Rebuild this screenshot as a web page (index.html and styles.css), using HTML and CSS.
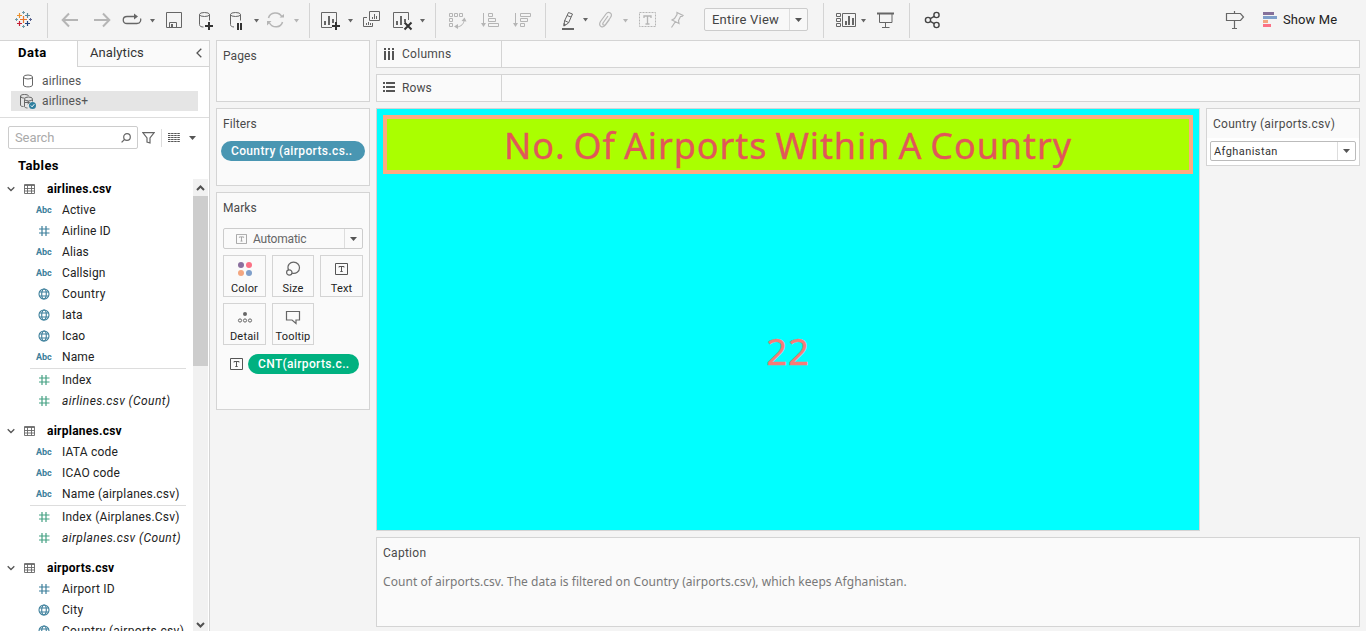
FILE: index.html
```html
<!DOCTYPE html>
<html lang="en">
<head>
<meta charset="utf-8">
<title>Airports worksheet</title>
<link rel="stylesheet" href="styles.css">
</head>
<body>
<svg width="0" height="0" class="defs">
  <symbol id="hash" viewBox="0 0 12 12"><path d="M4 1v10M8 1v10M1 4h10.500M1 8h10.500" fill="none" stroke="currentColor" stroke-width="1.200"/></symbol>
  <symbol id="globe" viewBox="0 0 12 12"><g fill="none" stroke="currentColor" stroke-width="1.100"><circle cx="6" cy="6" r="5"/><ellipse cx="6" cy="6" rx="2.300" ry="5"/><path d="M1.500 4h9M1.500 8h9"/></g></symbol>
  <symbol id="table" viewBox="0 0 11 10"><path d="M.5.5h10v9H.5zM.5 1.500h10M.5 4.500h10M.5 7h10M3.500 1v8.500M7.500 1v8.500" fill="none" stroke="#666" stroke-width=".9"/></symbol>
  <symbol id="open" viewBox="0 0 8 6"><path d="M.7 1.200L4 4.500 7.300 1.200" fill="none" stroke="#555" stroke-width="1.300"/></symbol>
  <symbol id="caret" viewBox="0 0 7 4"><path d="M0 0h7L3.500 4z" fill="currentColor"/></symbol>
  <symbol id="tmark" viewBox="0 0 13 12"><path d="M.5.5h12v11H.5z" fill="none" stroke="currentColor"/><path d="M4 4.500V3.500h5v1M6.500 3.500v5M5.300 8.500h2.400" fill="none" stroke="currentColor"/></symbol>
</svg>

<header class="toolbar">
  <svg width="47" height="40" viewBox="0 0 47 40"><g stroke-width="1.200"><path stroke="#e8762d" d="M23.500 16v7M20 19.500h7"/><path stroke="#eb912c" d="M19.500 13v5M17 15.500h5"/><path stroke="#59879b" d="M27.500 13v5M25 15.500h5"/><path stroke="#c72035" d="M19.500 21v5M17 23.500h5"/><path stroke="#1f447e" d="M27.500 21v5M25 23.500h5"/><path stroke="#7099a6" stroke-width="1" d="M23.500 11v3M22 12.500h3M23.500 25v3M22 26.500h3M16.500 18v3M15 19.500h3"/><path stroke="#5b6591" stroke-width="1" d="M30.500 18v3M29 19.500h3"/></g></svg>
  <i class="sep"></i>
  <svg width="36" height="40" viewBox="48 0 36 40"><path class="off s2" d="M63 20h15M69 13.500L62.700 20l6.300 6.500"/></svg>
  <svg width="32" height="40" viewBox="84 0 32 40"><path class="off s2" d="M94 20h15M103 13.500l6.300 6.500-6.300 6.500"/></svg>
  <svg width="46" height="40" viewBox="116 0 46 40"><path class="on" stroke-width="1.300" d="M132 16.500h-5c-5 0-5 7 0 7h10c4 0 4-4 3.500-5M128 16.500h7"/><path class="fill" d="M134 13.500l4 3-4 3zM150 19h5l-2.500 3.500z"/></svg>
  <svg width="28" height="40" viewBox="162 0 28 40"><path class="on" d="M166.500 12.500h15v15h-15zM169.500 27v-4.500h7V27"/><path class="fill" d="M171 24h2v3h-2z"/></svg>
  <svg width="32" height="40" viewBox="190 0 32 40"><path class="on" d="M199.500 14.500v10c0 2 2 2.500 4 2.500M209.500 14.500v6"/><ellipse class="on" cx="204.500" cy="14.500" rx="5" ry="2"/><path class="dark" d="M209 22v8M205 26h8"/></svg>
  <svg width="40" height="40" viewBox="222 0 40 40"><path class="on" d="M230.500 14.500v10c0 1.500 1 2.200 3.500 2.500M240.500 14.500v6"/><ellipse class="on" cx="235.500" cy="14.500" rx="5" ry="2"/><path class="dark" d="M238 23v7M241 23v7"/><path class="fill" d="M254 19h5l-2.500 3.500z"/></svg>
  <svg width="47" height="40" viewBox="262 0 47 40"><path class="off" stroke-width="1.500" d="M268.500 18c1.500-6 10.500-7 13.500-1M282.500 22c-1.500 6-10 6.500-13 1"/><path class="offfill" d="M279.500 17.500h4.500V14zM267 25.500v-4.500h4.500zM294 19h5l-2.500 3.500z"/></svg>
  <i class="sep"></i>
  <svg width="48" height="40" viewBox="310 0 48 40"><path class="on" d="M332 27.500h-10.500v-15h15V22"/><path class="fill" d="M324 21h2v4h-2zM328 16h2v9h-2zM332 19h2v4h-2zM348 19h5l-2.500 3.500z"/><path class="dark" d="M336 22v8M332 26h8"/></svg>
  <svg width="30" height="40" viewBox="358 0 30 40"><path class="on" d="M369.500 11.500h10v9h-10zM367 17.500h-3.500v9h9V23M372.500 19v-2M374.500 19v-5M376.500 19v-3M366.500 25v-2M368.500 25v-3M370.500 25v-2"/></svg>
  <svg width="47" height="40" viewBox="388 0 47 40"><path class="on" d="M403 27.500h-9.500v-15h15V20"/><path class="fill" d="M396 21h2v4h-2zM400 16h2v9h-2zM404 19h2v3h-2zM420 19h5l-2.500 3.500z"/><path class="dark" d="M404.500 22.500l7 7M411.500 22.500l-7 7"/></svg>
  <i class="sep"></i>
  <svg width="38" height="40" viewBox="436 0 38 40"><path class="off" d="M449.500 13.500h3v3h-3zM454.500 13.500h3v3h-3zM459.500 13.500h3v3h-3zM449.500 18.500h3v3h-3zM449.500 23.500h3v3h-3zM464 20c0 4-3 6.500-7 7"/><path class="offfill" d="M461.500 21l3-3.500 2 4zM458 24v5l-4-2.500z"/></svg>
  <svg width="32" height="40" viewBox="474 0 32 40"><path class="off" d="M483.500 13v11M488.500 13.500h4v3h-4zM488.500 18.500h7v3h-7zM488.500 23.500h10v3h-10z"/><path class="offfill" d="M481 23h5l-2.500 4z"/></svg>
  <svg width="39" height="40" viewBox="506 0 39 40"><path class="off" d="M515.500 13v11M520.500 13.500h10v3h-10zM520.500 18.500h7v3h-7zM520.500 23.500h4v3h-4z"/><path class="offfill" d="M513 23h5l-2.500 4z"/></svg>
  <i class="sep"></i>
  <svg width="46" height="40" viewBox="546 0 46 40"><path class="on" d="M568.500 12.500l4 1.500-4 9-4.500 3 .5-5zM564.500 20.500l4 2M567 15.500l4 1.500"/><path class="fill" d="M562 28h12v2h-12zM583 18h5l-2.500 3.500zM563.500 23l2.500 1.500-2.500 2z"/></svg>
  <svg width="42" height="40" viewBox="592 0 42 40"><path class="off" stroke-width="1.200" d="M608 16l-5 7c-1 2 1.500 3 2.500 1.500l5-7c3-4-2-7-4.500-3.500l-5.500 7.500c-3 5 2.500 7 5 3.500l4-5.500"/><path class="offfill" d="M623 19h5l-2.500 3.500z"/></svg>
  <svg width="30" height="40" viewBox="634 0 30 40"><path class="off" stroke-dasharray="2 1" d="M639.500 12.500h16v14h-16z"/><path class="off" stroke-width="1.300" d="M644 18v-2h7v2M647.500 16v8M645.500 24h4"/></svg>
  <svg width="40" height="40" viewBox="664 0 40 40"><path class="off" stroke-width="1.200" d="M677 12.500l6 3-1 1-1.500 0-2 4 .5 3-7-3.500 2.500-1.500 2.500-4zM675.500 21.500l-4 6"/></svg>
  <div class="fit"><span>Entire View</span><b><svg width="7" height="4"><use href="#caret"/></svg></b></div>
  <i class="sep sep-fit"></i>
  <svg width="46" height="40" viewBox="824 0 46 40"><path class="on" d="M836.500 13.500h4v3h-4zM836.500 18.500h4v3h-4zM836.500 23.500h4v3h-4zM842.500 13.500h13v13h-13z"/><path class="fill" d="M845 21h2v4h-2zM848 16h2v9h-2zM852 18h2v7h-2zM861 19h5l-2.500 3.500z"/></svg>
  <svg width="39" height="40" viewBox="870 0 39 40"><path class="fill" d="M877 12.500h17v2h-17z"/><path class="on" d="M879.500 14v8.500h12.500V14M885.500 23v4.500M882 27.500h7.500"/></svg>
  <i class="sep"></i>
  <svg width="50" height="40" viewBox="910 0 50 40"><g fill="none" stroke="#444" stroke-width="1.400"><circle cx="928" cy="20" r="2.600"/><circle cx="936.500" cy="15" r="2.600"/><circle cx="936.500" cy="25" r="2.600"/><path d="M930.300 18.600l4-2.300M930.300 21.400l4 2.300"/></g></svg>
  <svg class="push" width="32" height="40" viewBox="1220 0 32 40"><path class="on" stroke-width="1.200" d="M1226.500 13.500h14l3 3.500-3 3.500h-14zM1234.500 11v2.500M1234.500 20.500v8M1232 28.500h5"/></svg>
  <svg width="31" height="40" viewBox="1252 0 31 40"><path fill="#85709a" d="M1263 12h11v3h-11z"/><path fill="#7f9fca" d="M1263 16h14v3h-14z"/><path fill="#f3a680" d="M1263 20h5v3h-5z"/><path fill="#fb7185" d="M1263 24h8v3h-8z"/></svg>
  <span class="showme">Show Me</span>
</header>

<div class="work">
<aside class="side">
  <div class="tabs"><span class="tab active">Data</span><span class="tab"><span>Analytics</span><svg width="6" height="10" viewBox="0 0 6 10"><path d="M5.300.7L1 5l4.300 4.300" fill="none" stroke="#555" stroke-width="1.300"/></svg></span></div>
  <div class="sources">
    <div class="src"><svg width="16" height="16" viewBox="0 0 16 16"><path class="on" d="M3.500 4v8c0 2.500 9 2.500 9 0V4"/><ellipse class="on" cx="8" cy="4" rx="4.500" ry="2"/></svg><span>airlines</span></div>
    <div class="src sel"><svg width="16" height="16" viewBox="0 0 16 16"><path class="on" d="M.5 3v9c0 1 1 1.500 3 1.500M8.500 3c0-2-8-2-8 0s3 2 4 2M4.500 6.500v7c0 1 2 1.500 3 1.500M12.500 6.500v2"/><ellipse class="on" cx="8.500" cy="6" rx="4" ry="2"/><path class="on" d="M5 9.500h4M7.500 8l2 1.500-2 1.500"/><circle cx="12.500" cy="12.500" r="3.500" fill="#2e7f9f"/><path d="M10.800 12.500l1.300 1.300 2.200-2.600" fill="none" stroke="#fff"/></svg><span>airlines+</span></div>
  </div>
  <div class="find">
    <div class="search"><span>Search</span><svg width="10" height="10" viewBox="0 0 10 10"><circle class="on" cx="6" cy="4" r="3.300" stroke-width="1.200"/><path class="on" stroke-width="1.300" d="M3.600 6.400L.6 9.400"/></svg></div>
    <svg width="13" height="12" viewBox="0 0 13 12"><path class="on" stroke-width="1.200" d="M.8.6h11.400L8 6v5L5 10V6z"/></svg>
    <i></i>
    <svg width="12" height="10" viewBox="0 0 12 10"><path d="M0 .5h12M0 2.500h12M0 4.500h12M0 6.500h12M0 8.500h12" stroke="#555" stroke-dasharray="2.500 .6"/></svg>
    <svg class="dd" width="7" height="4"><use href="#caret"/></svg>
  </div>
  <h2>Tables</h2>
  <div class="fields">
    <div class="list">
      <div class="tbl"><svg width="8" height="6"><use href="#open"/></svg><svg width="11" height="10"><use href="#table"/></svg><span>airlines.csv</span></div>
      <div class="f"><em>Abc</em><span>Active</span></div>
      <div class="f"><svg width="12" height="12"><use href="#hash"/></svg><span>Airline ID</span></div>
      <div class="f"><em>Abc</em><span>Alias</span></div>
      <div class="f"><em>Abc</em><span>Callsign</span></div>
      <div class="f"><svg width="12" height="12"><use href="#globe"/></svg><span class="wide">Country</span></div>
      <div class="f"><svg width="12" height="12"><use href="#globe"/></svg><span>Iata</span></div>
      <div class="f"><svg width="12" height="12"><use href="#globe"/></svg><span>Icao</span></div>
      <div class="f"><em>Abc</em><span>Name</span></div>
      <hr>
      <div class="f m"><svg width="12" height="12"><use href="#hash"/></svg><span>Index</span></div>
      <div class="f m it"><svg width="12" height="12"><use href="#hash"/></svg><span>airlines.csv (Count)</span></div>
      <div class="tbl next"><svg width="8" height="6"><use href="#open"/></svg><svg width="11" height="10"><use href="#table"/></svg><span>airplanes.csv</span></div>
      <div class="f"><em>Abc</em><span class="long">IATA code</span></div>
      <div class="f"><em>Abc</em><span class="long">ICAO code</span></div>
      <div class="f"><em>Abc</em><span class="long">Name (airplanes.csv)</span></div>
      <hr>
      <div class="f m"><svg width="12" height="12"><use href="#hash"/></svg><span class="long">Index (Airplanes.Csv)</span></div>
      <div class="f m it"><svg width="12" height="12"><use href="#hash"/></svg><span>airplanes.csv (Count)</span></div>
      <div class="tbl next"><svg width="8" height="6"><use href="#open"/></svg><svg width="11" height="10"><use href="#table"/></svg><span>airports.csv</span></div>
      <div class="f"><svg width="12" height="12"><use href="#hash"/></svg><span class="long">Airport ID</span></div>
      <div class="f"><svg width="12" height="12"><use href="#globe"/></svg><span class="wide">City</span></div>
      <div class="f"><svg width="12" height="12"><use href="#globe"/></svg><span class="wide">Country (airports.csv)</span></div>
    </div>
    <div class="scroll"><svg width="15" height="17" viewBox="0 0 15 17"><path d="M4 11l3.500-3.500L11 11" fill="none" stroke="#505050" stroke-width="2"/></svg><div class="thumb"></div><svg class="down" width="15" height="17" viewBox="0 0 15 17"><path d="M4 9l3.500 3.500L11 9" fill="none" stroke="#505050" stroke-width="2"/></svg></div>
  </div>
</aside>

<section class="cards">
  <div class="card pages"><h3>Pages</h3></div>
  <div class="card filters"><h3>Filters</h3><div class="pill blue">Country (airports.cs..</div></div>
  <div class="card marks"><h3>Marks</h3>
    <div class="type"><svg width="11" height="10"><use href="#tmark"/></svg><span>Automatic</span><b><svg width="7" height="4"><use href="#caret"/></svg></b></div>
    <div class="shelf">
      <div class="btn"><svg width="16" height="16" viewBox="0 0 16 16"><circle cx="4" cy="4" r="3" fill="#8a6f9e"/><circle cx="12" cy="4" r="3" fill="#fb7185"/><circle cx="4" cy="12" r="3" fill="#f3a680"/><circle cx="12" cy="12" r="3" fill="#7f9fca"/></svg><span>Color</span></div>
      <div class="btn"><svg width="16" height="16" viewBox="0 0 16 16"><path class="on" stroke-width="1.200" d="M3.500 9C1.500 3.500 5.500 1.200 8.500 1.200c4 0 6 3 6 5.500 0 4-3.500 6.500-7.500 5.500"/><circle class="on" stroke-width="1.200" cx="4.300" cy="11.500" r="2.700"/></svg><span>Size</span></div>
      <div class="btn"><svg width="16" height="16" viewBox="-1 -2 16 16"><use href="#tmark" width="13" height="12"/></svg><span>Text</span></div>
      <div class="btn"><svg width="16" height="16" viewBox="0 0 16 16"><circle cx="8" cy="5" r="2" fill="#666"/><g class="on"><circle cx="3" cy="11.500" r="1.600"/><circle cx="8" cy="11.500" r="1.600"/><circle cx="13" cy="11.500" r="1.600"/></g></svg><span>Detail</span></div>
      <div class="btn"><svg width="16" height="16" viewBox="0 0 16 16"><path class="on" stroke-width="1.200" d="M1.500 2.500h13v8.500H11v3.500L7 11H1.500z"/></svg><span>Tooltip</span></div>
    </div>
    <div class="markrow"><svg width="13" height="12"><use href="#tmark"/></svg><div class="pill green">CNT(airports.c..</div></div>
  </div>
</section>

<main class="main">
  <div class="drop"><div class="name"><svg width="12" height="12" viewBox="0 0 12 12"><path fill="#555" d="M1 0h2v2H1zM5 0h2v2H5zM9 0h2v2H9zM1 3h2v9H1zM5 3h2v9H5zM9 3h2v9H9z"/></svg><span class="wide">Columns</span></div></div>
  <div class="drop"><div class="name"><svg width="12" height="12" viewBox="0 0 12 12"><path fill="#555" d="M0 0h2v2H0zM0 4h2v2H0zM0 8h2v2H0zM3 0h9v2H3zM3 4h9v2H3zM3 8h9v2H3z"/></svg><span>Rows</span></div></div>
  <div class="mid">
    <div class="view"><h1>No. Of Airports Within A Country</h1><div class="value">22</div></div>
    <div class="qf"><h3 class="wide">Country (airports.csv)</h3><div class="pick"><span>Afghanistan</span><b><svg width="7" height="4"><use href="#caret"/></svg></b></div></div>
  </div>
  <div class="caption"><h3 class="wide">Caption</h3><p>Count of airports.csv. The data is filtered on Country (airports.csv), which keeps Afghanistan.</p></div>
</main>
</div>
</body>
</html>
```
FILE: styles.css
```css
* { box-sizing: border-box; }
body { margin: 0; width: 1366px; height: 631px; overflow: hidden; display: flex; flex-direction: column; background: #f4f4f4; color: #4a4a4a; font: 12px/16px Roboto, "Liberation Sans", sans-serif; letter-spacing: 0.1px; }
h1, h2, h3, p { margin: 0; font-weight: 400; }
h3 { font-size: 12px; line-height: 16px; }
svg { display: block; flex: none; }
.wide { letter-spacing: 0.28px; }
.long { letter-spacing: 0.2px; }
.defs { position: absolute; }
.on { fill: none; stroke: #666; }
.off { fill: none; stroke: #b5b5b5; }
.s2 { stroke-width: 2; }
.fill { fill: #666; }
.offfill { fill: #b5b5b5; }
.dark { fill: none; stroke: #333; stroke-width: 2; }

.toolbar { display: flex; align-items: center; height: 40px; flex: none; }
.sep { width: 1px; height: 35px; background: #d4d4d4; flex: none; }
.sep-fit { margin-left: 15px; }
.fit { display: flex; width: 104px; height: 23px; margin-top: -1px; border: 1px solid #ccc; border-radius: 2px; background: #f8f8f8; font-size: 13px; line-height: 21px; padding-left: 7px; justify-content: space-between; color: #444; flex: none; letter-spacing: 0.23px; }
.fit b, .type b, .pick b { width: 18px; border-left: 1px solid #ddd; display: flex; align-items: center; justify-content: center; color: #555; }
.push { margin-left: auto; }
.showme { width: 83px; font-size: 13px; color: #222; flex: none; }

.work { display: flex; flex: 1; min-height: 0; }
.side { width: 210px; background: #fff; border: solid #d4d4d4; border-width: 1px 1px 0 0; display: flex; flex-direction: column; flex: none; }
.tabs { display: flex; height: 26px; font-size: 13px; line-height: 24px; flex: none; color: #333; }
.tab { flex: 1; display: flex; align-items: center; justify-content: space-between; background: #fafafa; border: solid #d4d4d4; border-width: 0 0 1px 1px; padding: 0 7px 1px 12px; }
.tab.active { flex: none; width: 77px; background: #fff; border: 0; padding: 0 0 2px 18px; font-weight: 700; color: #000; letter-spacing: 0.5px; }
.sources { padding: 4px 11px 6px; border-bottom: 1px solid #ddd; flex: none; }
.src { display: flex; align-items: center; height: 20px; padding-left: 9px; gap: 6px; color: #555; }
.sel { background: #e5e5e5; }
.find { display: flex; align-items: center; height: 23px; margin: 8px 0 0 8px; flex: none; }
.search { width: 130px; height: 23px; display: flex; align-items: center; justify-content: space-between; border: 1px solid #ccc; border-radius: 2px; padding: 0 6px; color: #aaa; font-size: 13px; letter-spacing: -0.1px; margin-right: 4px; }
.find i { width: 1px; height: 18px; background: #ddd; margin: 0 6px 0 6px; }
.dd { margin-left: 9px; color: #555; }
h2 { font-size: 13px; font-weight: 700; color: #000; line-height: 16px; margin: 9px 0 4px 18px; flex: none; letter-spacing: 0.4px; }
.fields { display: flex; flex: 1; min-height: 0; overflow: hidden; }
.list { width: 193px; color: #222; }
.tbl, .f { display: flex; align-items: center; height: 21px; }
.tbl { padding-left: 7px; gap: 9px; font-weight: 700; color: #000; letter-spacing: 0.25px; }
.tbl span { margin-left: 3px; }
.next { margin-top: 9px; }
.f { padding-left: 36px; color: #222; }
.f em { width: 26px; font: 700 9px/12px Roboto, sans-serif; color: #3c7f9b; letter-spacing: 0; }
.f svg { margin: 0 12px 0 2px; color: #3c7f9b; }
.m svg { color: #45a183; }
.it span { font-style: italic; letter-spacing: 0.42px; }
hr { margin: 1px 7px 0 30px; border: 0; height: 1px; background: #ddd; }
.scroll { width: 15px; margin-top: 1px; background: #f1f1f1; display: flex; flex-direction: column; }
.thumb { height: 170px; background: #cdcdcd; }
.down { margin-top: auto; }

.cards { width: 154px; margin-left: 6px; display: flex; flex-direction: column; gap: 6px; flex: none; }
.card, .drop, .caption { background: #fafafa; border: 1px solid #d4d4d4; }
.card { padding: 7px 6px; }
.pages { height: 62px; }
.filters { height: 78px; }
.marks { height: 218px; }
.pill { height: 20px; border-radius: 10px; color: #fff; padding: 0 10px; line-height: 20px; font-weight: 500; letter-spacing: 0.35px; white-space: nowrap; }
.blue { width: 144px; background: #4996b2; margin: 9px 0 0 -2px; }
.green { width: 111px; background: #00b180; }
.type { display: flex; align-items: center; width: 140px; height: 21px; margin-top: 12px; border: 1px solid #ccc; border-radius: 2px; padding-left: 12px; color: #666; letter-spacing: -0.2px; }
.type > svg { color: #999; margin-right: 6px; }
.type b { margin-left: auto; height: 19px; }
.shelf { display: grid; grid-template-columns: 43px 42px 43px; column-gap: 6px; row-gap: 6px; margin-top: 6px; }
.btn { height: 42px; border: 1px solid #d4d4d4; display: flex; flex-direction: column; align-items: center; padding: 5px 0 0 0; font-size: 11px; line-height: 14px; color: #222; gap: 5px; letter-spacing: 0.17px; }
.btn svg, .markrow svg { color: #555; }
.markrow { display: flex; align-items: center; gap: 5px; margin: 9px 0 0 7px; }

.main { width: 984px; margin-left: 6px; display: flex; flex-direction: column; flex: none; }
.drop { height: 28px; margin-bottom: 6px; }
.name { width: 125px; height: 26px; border-right: 1px solid #d4d4d4; display: flex; align-items: center; padding-left: 6px; gap: 7px; }
.mid { display: flex; gap: 6px; align-items: flex-start; }
.view { width: 824px; height: 423px; background: #0ff; border: 1px solid #d4d4d4; padding: 6px; display: flex; flex-direction: column; }
h1 { height: 59px; background: #af0; border: 4px solid #ffaa80; color: #e15759; font: 36px/54px "Noto Sans", sans-serif; letter-spacing: 0.9px; word-spacing: -2.2px; text-align: center; white-space: nowrap; -webkit-text-stroke: 0.35px #e15759; }
.value { flex: 1; display: flex; align-items: center; justify-content: center; padding-top: 3px; color: #f67c78; font: 37px/50px "Noto Sans", sans-serif; letter-spacing: 0.5px; -webkit-text-stroke: 0.35px #f67c78; }
.qf { width: 154px; height: 58px; border: 1px solid #d4d4d4; background: #fff; }
.qf h3 { height: 29px; background: #fafafa; padding: 7px 6px 0; white-space: nowrap; }
.pick { display: flex; justify-content: space-between; width: 146px; height: 20px; margin: 3px; border: 1px solid #bbb; border-radius: 2px; background: #fff; font-size: 11px; line-height: 19px; padding-left: 3px; color: #333; letter-spacing: 0.42px; }
.caption { height: 90px; margin-top: 6px; padding: 7px 6px; }
.caption p { margin-top: 13px; font-family: "Noto Sans", sans-serif; color: #787878; white-space: nowrap; letter-spacing: 0.05px; }
```
